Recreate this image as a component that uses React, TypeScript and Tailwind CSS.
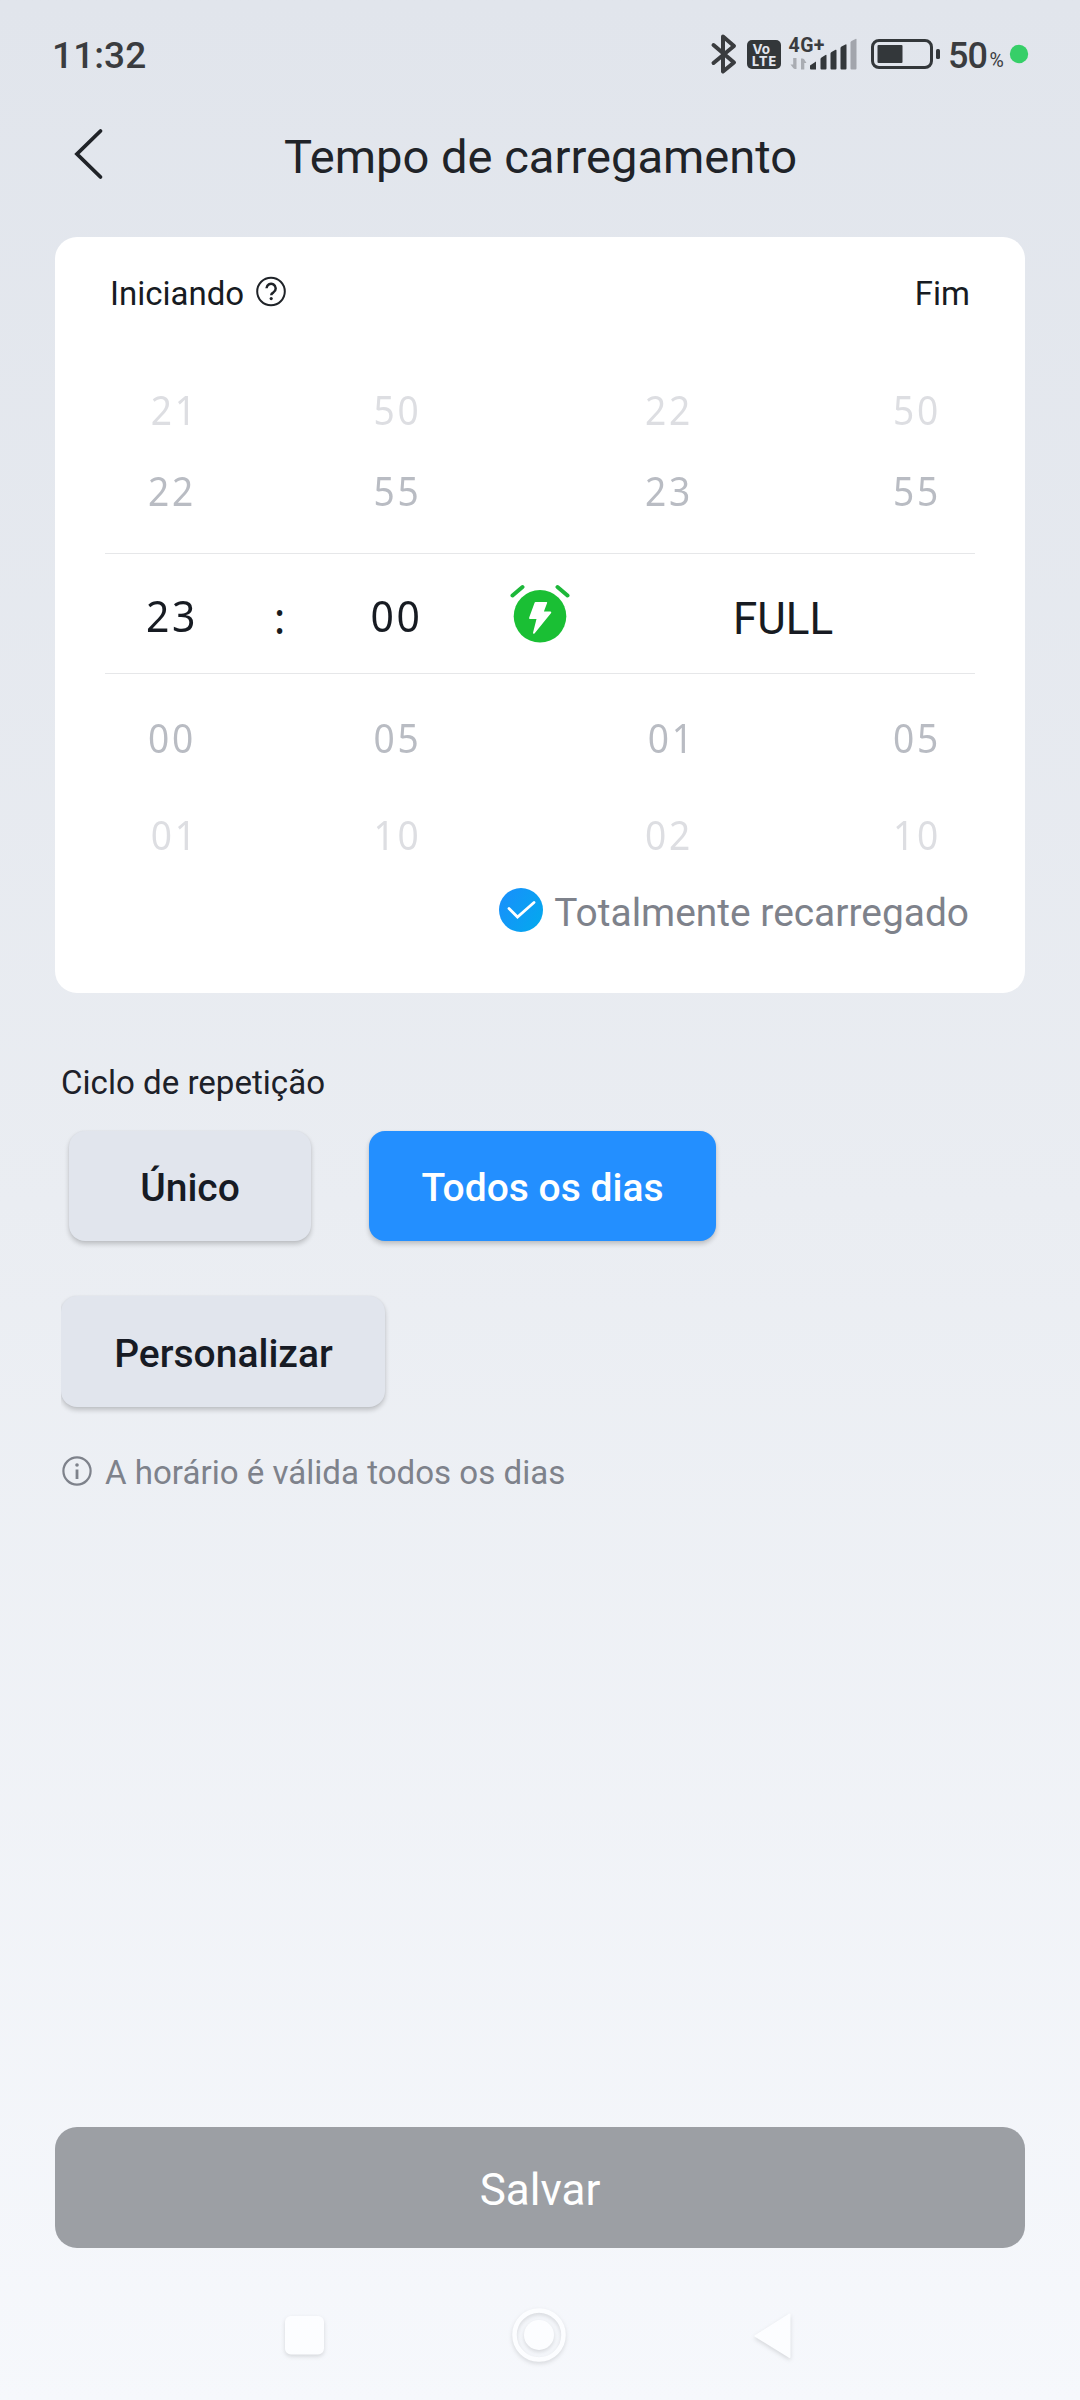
import React from "react";

const GRID = "grid grid-cols-[131px_89px_142px_146px_109px_134px_119px] items-center text-center";

function PickerRow({ values, className }: { values: string[]; className: string }) {
  const [startHour, startMinute, endHour, endMinute] = values;
  return (
    <div className={`${GRID} pt-[3px] font-['Noto_Sans',sans-serif] text-[39.5px] tracking-[2.9px] ${className}`}>
      <Digits value={startHour} />
      <span />
      <Digits value={startMinute} />
      <span />
      <Digits value={endHour} />
      <span />
      <Digits value={endMinute} />
    </div>
  );
}

/* Pairs ending in "1" are centred on their narrower ink. */
function Digits({ value }: { value: string }) {
  return <span className={`scale-x-[0.94] ${value.endsWith("1") ? "pl-[9px]" : "pl-[3px]"}`}>{value}</span>;
}

function StatusBar() {
  return (
    <div className="flex h-[108px] items-center pl-[52px] pr-[35px] text-[#3a3c3f]">
      <span className="pt-[3px] text-[37px] leading-[108px] font-medium tracking-[0.1px]">11:32</span>
      <svg className="ml-auto" width="340" height="60" viewBox="705 24 340 60" fill="none">
        <path d="M713.5 45 734 62.5 723 71.5V36.500L734 46 713.500 63" stroke="#3a3c3f" strokeWidth="4" strokeLinejoin="round" strokeLinecap="round" />
        <rect x="747" y="40" width="34" height="29" rx="5" fill="#33373a" />
        <text x="752.5" y="53.5" fontSize="13.5" fontWeight="700" fill="#e2e6ee" fontFamily="Inter, sans-serif">Vo</text>
        <text x="752" y="66" fontSize="12.500" fontWeight="800" fill="#e2e6ee" fontFamily="Inter, sans-serif" textLength="24">LTE</text>
        <text x="788.5" y="52" fontSize="19.500" fontWeight="700" fill="#3a3c3f" fontFamily="Roboto, sans-serif" textLength="36">4G+</text>
        <path d="M793.200 58h3.300v11h-1.500q-1 0-1.600-.8L790.500 64.500h2.700z M804.300 69.500h-3.300v-11h1.500q1 0 1.600.8L806.500 63h-2.200z" fill="#a9acb2" />
        <path d="M810 65.500 816 61.500V69.500H811q-1 0-1-1z" fill="#33373a" />
        <path d="M820.500 59q0-1 1-1.600l4-2.400q1-.5 1 .6V68.500q0 1-1 1h-4q-1 0-1-1z M830.500 53.500q0-1 1-1.500l4-2.200q1-.5 1 .6V68.500q0 1-1 1h-4q-1 0-1-1z M840.500 48q0-1 1-1.500l4-2q1-.5 1 .6V68.500q0 1-1 1h-4q-1 0-1-1z" fill="#33373a" />
        <path d="M850.500 42.500q0-1 1-1.500l4-2q1-.5 1 .6V68.500q0 1-1 1h-4q-1 0-1-1z" fill="#a2a5ac" />
        <rect x="872.500" y="40.500" width="59" height="27" rx="6.500" stroke="#33373a" strokeWidth="3" />
        <rect x="877.500" y="45" width="25" height="18" rx="1" fill="#33373a" />
        <rect x="936" y="49" width="4" height="10" rx="1.500" fill="#33373a" />
        <text x="948" y="68" fontSize="36" fontWeight="500" fill="#3a3c3f" fontFamily="Roboto, sans-serif" textLength="40">50</text>
        <text x="989.500" y="66.500" fontSize="19.500" fill="#3a3c3f" fontFamily="Roboto, sans-serif">%</text>
        <circle cx="1019" cy="54" r="9.200" fill="#36cf68" />
      </svg>
    </div>
  );
}

function ChargeAlarmIcon() {
  return (
    <svg width="60" height="60" viewBox="510 584 60 60" className="mx-auto">
      <path d="M512.500 595.500 522.500 587M567.500 595.500 557.500 587" stroke="#1db73a" strokeWidth="4" strokeLinecap="round" />
      <circle cx="540" cy="616.300" r="26.300" fill="#1abf34" />
      <path d="M535.500 602h11q1 0 .600 1l-3.200 8.500h6.500q1.400.2.700 1.500L534.500 633.500q-1.500 1-1.500-.8L536.500 619h-6.500q-1.300 0-.8-1.500L534.500 603q.3-1 1-1z" fill="#fff" />
    </svg>
  );
}

function TimeCard() {
  return (
    <section className="mx-[55px] h-[756px] rounded-[22px] bg-white px-[50px] text-[#171b22]">
      <div className="flex h-[131px] justify-between pl-[5px] pr-[5px] text-[33px] leading-[113px]">
        <div className="flex">
          <span>Iniciando</span>
          <svg className="mt-[38px] ml-[11px]" width="32" height="32" viewBox="0 0 32 32" fill="none" stroke="#1f2328">
            <circle cx="16" cy="16.500" r="13.800" strokeWidth="2" />
            <path d="M11.500 13.300a4.600 4.600 0 1 1 7 4q-2.300 1.300-2.300 3" strokeWidth="2.500" />
            <circle cx="16.200" cy="23.600" r="1.600" fill="#1f2328" stroke="none" />
          </svg>
        </div>
        <span>Fim</span>
      </div>
      <PickerRow values={["21", "50", "22", "50"]} className="h-[82px] text-[#dddee2]" />
      <PickerRow values={["22", "55", "23", "55"]} className="h-[81px] text-[#b9bcc3]" />
      <div className="mt-[22px] grid h-[121px] grid-cols-[131px_89px_142px_146px_340px] grid-rows-[119px] items-center border-y border-[#e6e7e9] text-center font-['Noto_Sans',sans-serif] text-[43.5px] leading-[60px] tracking-[2.8px]">
        <span className="scale-x-[0.94] pt-[3px] pl-[3px]">23</span>
        <span className="pt-[6px] pl-px">:</span>
        <span className="scale-x-[0.94] pt-[3px] pl-px">00</span>
        <ChargeAlarmIcon />
        <span className="pt-[10px] font-[Roboto,sans-serif] text-[44px] tracking-normal">FULL</span>
      </div>
      <PickerRow values={["00", "05", "01", "05"]} className="mt-[15px] h-[97px] text-[#b9bcc3]" />
      <PickerRow values={["01", "10", "02", "10"]} className="h-[97px] text-[#dddee2]" />
      <div className="flex h-[58px] justify-end gap-[11px] pr-[6px]">
        <svg className="mt-[5px]" width="44" height="44" viewBox="0 0 44 44" fill="none">
          <defs>
            <linearGradient id="check" x1="0" y1="0.2" x2="1" y2="0.8">
              <stop offset="0" stopColor="#1890fb" />
              <stop offset="1" stopColor="#04a8ee" />
            </linearGradient>
          </defs>
          <circle cx="22" cy="22" r="22" fill="url(#check)" />
          <path d="m10 20.500 8.500 8.500 16.500-14.500" stroke="#fff" strokeWidth="2.800" strokeLinecap="round" />
        </svg>
        <span className="text-[38.9px] leading-[60px] text-[#7e828b]">Totalmente recarregado</span>
      </div>
    </section>
  );
}

const CHIP =
  "flex items-center justify-center rounded-[16px] text-[39px] font-medium shadow-[0_3px_5px_rgba(0,0,0,0.2),0_0_2px_rgba(0,0,0,0.06)]";

export default function App() {
  return (
    <main className="flex h-[2400px] w-[1080px] flex-col overflow-hidden bg-linear-to-b from-[#e1e5ec] via-[#eaedf2] to-[#f6f8fc] font-[Roboto,sans-serif]">
      <StatusBar />
      <header className="grid h-[129px] grid-cols-[180px_1fr_180px] text-[#202328]">
        <svg className="mt-[16px] ml-[68px]" width="60" height="60" viewBox="68 124 60 60" fill="none">
          <path d="M100.500 131 77 154 100.500 177" stroke="#202328" strokeWidth="3.800" strokeLinecap="round" />
        </svg>
        <h1 className="pl-px text-center text-[47.1px] leading-[98px]">Tempo de carregamento</h1>
      </header>
      <TimeCard />
      <section className="pt-[58px]">
        <h2 className="pl-[61px] text-[33.1px] leading-[64px] text-[#1d2129]">Ciclo de repetição</h2>
        <div className="mt-[16px] flex gap-[58px] pl-[69px]">
          <button className={`${CHIP} h-[110px] w-[242px] bg-[#e1e5ed] pt-[4px] text-[#171b24]`}>Único</button>
          <button className={`${CHIP} h-[110px] w-[347px] bg-[#238fff] pt-[4px] text-white`}>Todos os dias</button>
        </div>
        <div className="mt-[45px] ml-[61px] h-[130px] overflow-hidden pt-[10px]">
          <button className={`${CHIP} h-[111px] w-[324px] bg-[#e1e5ed] pt-[5px] pl-px text-[#171b24]`}>Personalizar</button>
        </div>
        <div className="mt-[25px] flex items-start gap-[12px] pl-[61px] text-[#7e828b]">
          <svg className="mt-[15px]" width="32" height="32" viewBox="0 0 32 32" fill="none" stroke="#7e828b">
            <circle cx="16" cy="15" r="13.600" strokeWidth="2.200" />
            <path d="M16 13.500V23" strokeWidth="2.800" />
            <circle cx="16" cy="9" r="1.800" fill="#7e828b" stroke="none" />
          </svg>
          <p className="text-[33.1px] leading-[64px]">A horário é válida todos os dias</p>
        </div>
      </section>
      <button className="mx-[55px] mt-auto flex h-[121px] shrink-0 items-center justify-center rounded-[22px] bg-[#9c9fa4] pt-[4px] text-[44px] text-white">
        Salvar
      </button>
      <nav className="grid h-[152px] shrink-0 grid-cols-[609px_471px]">
        <svg width="609" height="152" viewBox="0 2248 609 152" fill="#fcfdff" className="drop-shadow-[0_2px_2px_rgba(0,0,0,0.13)]">
          <rect x="285" y="2316" width="39" height="38.500" rx="6" />
          <circle cx="539" cy="2335" r="24.500" fill="none" stroke="#fcfdff" strokeWidth="4.500" />
          <circle cx="539" cy="2335" r="15" />
        </svg>
        <svg width="471" height="152" viewBox="609 2248 471 152" fill="#fcfdff" className="drop-shadow-[0_2px_2px_rgba(0,0,0,0.13)]">
          <path d="M755.500 2336 789.500 2314.500V2357z" stroke="#fcfdff" strokeWidth="2" strokeLinejoin="round" />
        </svg>
      </nav>
    </main>
  );
}
